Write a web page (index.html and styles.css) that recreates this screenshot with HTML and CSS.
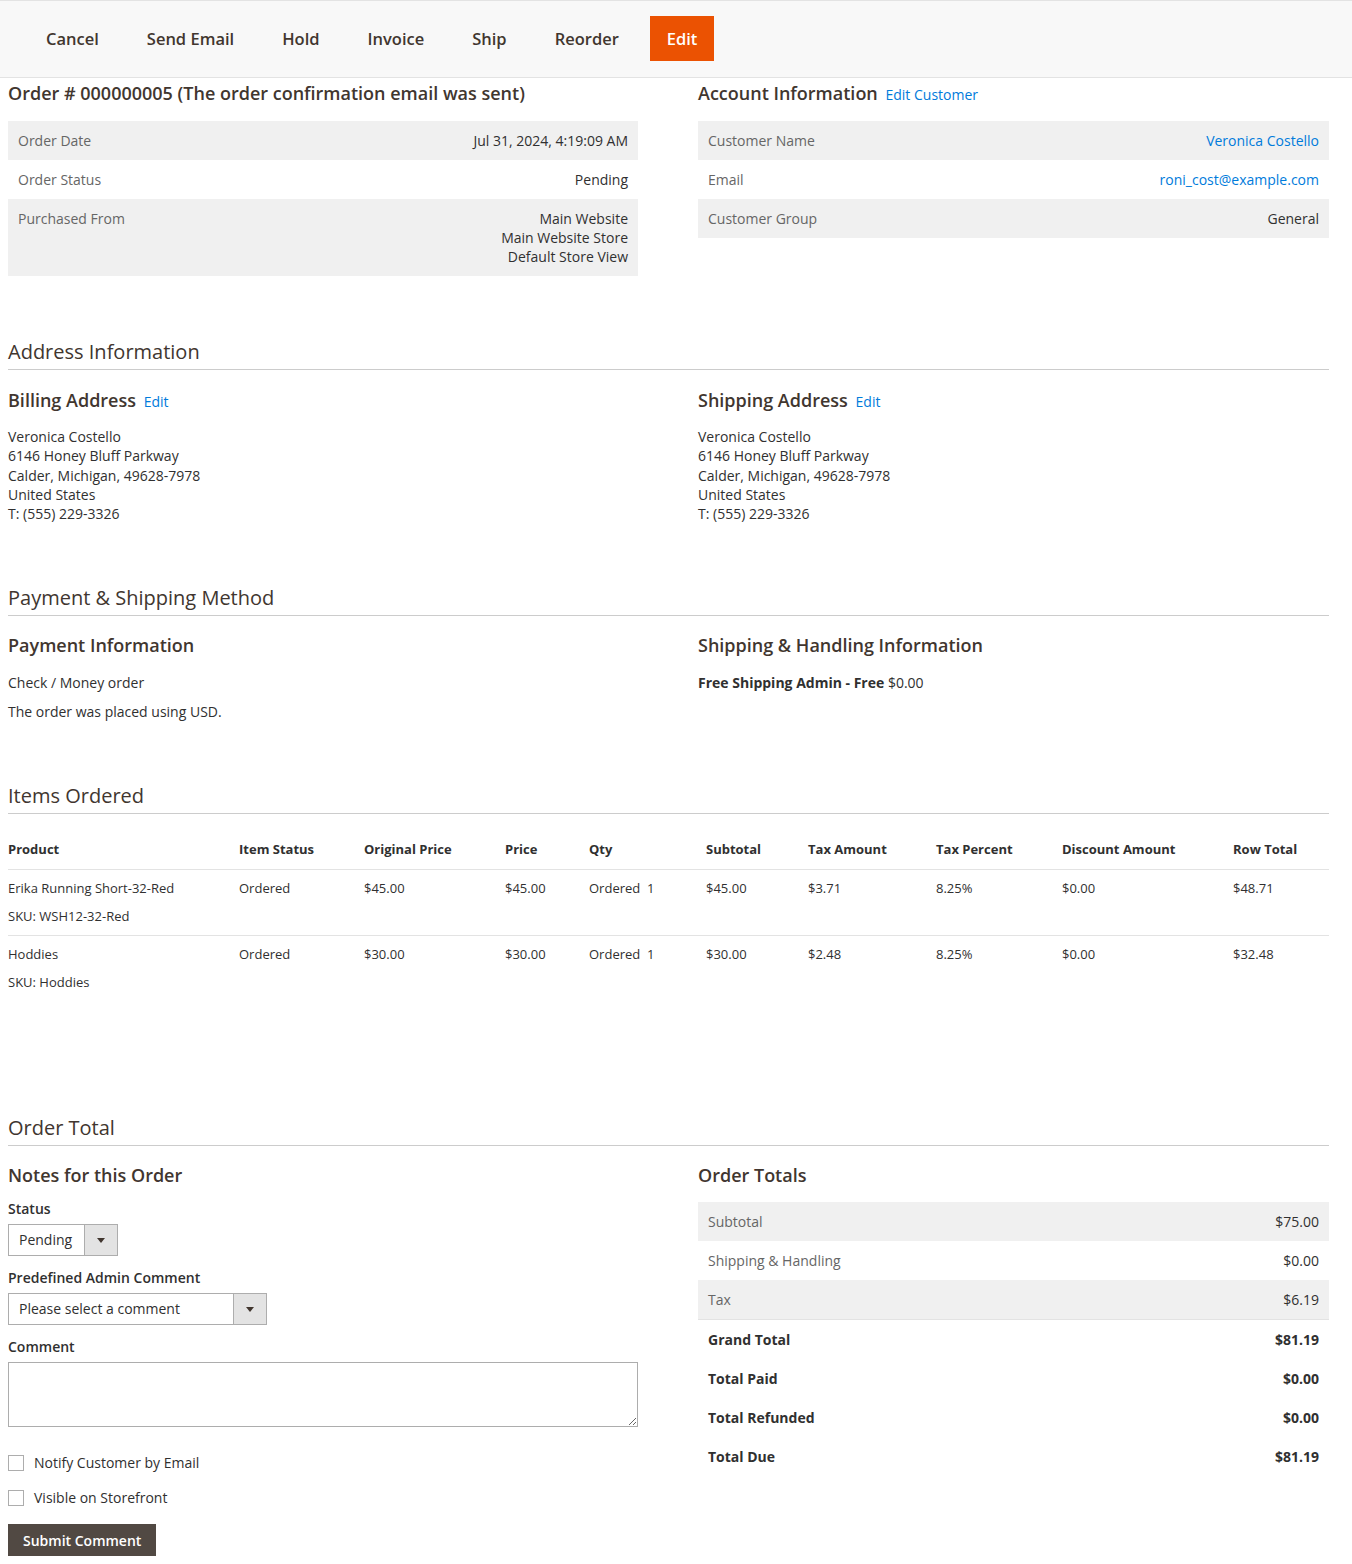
FILE: index.html
```html
<!DOCTYPE html>
<html lang="en">
<head>
<meta charset="utf-8">
<title>Order # 000000005</title>
<link rel="stylesheet" href="styles.css">
</head>
<body>
<div class="actions-bar">
  <button class="act">Cancel</button>
  <button class="act">Send Email</button>
  <button class="act">Hold</button>
  <button class="act">Invoice</button>
  <button class="act">Ship</button>
  <button class="act">Reorder</button>
  <button class="act act-primary">Edit</button>
</div>

<main class="page">
  <section class="two-col top">
    <div class="col">
      <h2 class="block-title">Order # 000000005 (The order confirmation email was sent)</h2>
      <table class="info">
        <tr><th>Order Date</th><td>Jul 31, 2024, 4:19:09 AM</td></tr>
        <tr><th>Order Status</th><td>Pending</td></tr>
        <tr><th>Purchased From</th><td>Main Website<br>Main Website Store<br>Default Store View</td></tr>
      </table>
    </div>
    <div class="col">
      <h2 class="block-title">Account Information <a class="link" href="#">Edit Customer</a></h2>
      <table class="info">
        <tr><th>Customer Name</th><td><a class="link" href="#">Veronica Costello</a></td></tr>
        <tr><th>Email</th><td><a class="link" href="#">roni_cost@example.com</a></td></tr>
        <tr><th>Customer Group</th><td>General</td></tr>
      </table>
    </div>
  </section>

  <section class="section addr">
    <h3 class="section-title">Address Information</h3>
    <div class="two-col">
      <div class="col">
        <h2 class="block-title">Billing Address <a class="link" href="#">Edit</a></h2>
        <address>Veronica Costello<br>6146 Honey Bluff Parkway<br>Calder, Michigan, 49628-7978<br>United States<br>T: (555) 229-3326</address>
      </div>
      <div class="col">
        <h2 class="block-title">Shipping Address <a class="link" href="#">Edit</a></h2>
        <address>Veronica Costello<br>6146 Honey Bluff Parkway<br>Calder, Michigan, 49628-7978<br>United States<br>T: (555) 229-3326</address>
      </div>
    </div>
  </section>

  <section class="section pay">
    <h3 class="section-title">Payment &amp; Shipping Method</h3>
    <div class="two-col">
      <div class="col">
        <h2 class="block-title">Payment Information</h2>
        <p class="line">Check / Money order</p>
        <p class="line">The order was placed using USD.</p>
      </div>
      <div class="col">
        <h2 class="block-title">Shipping &amp; Handling Information</h2>
        <p class="line"><strong>Free Shipping Admin - Free</strong> $0.00</p>
      </div>
    </div>
  </section>

  <section class="section items">
    <h3 class="section-title">Items Ordered</h3>
    <table class="grid">
      <colgroup>
        <col class="c-prod"><col class="c-status"><col class="c-orig"><col class="c-price"><col class="c-qty"><col class="c-sub"><col class="c-tax"><col class="c-pct"><col class="c-disc"><col class="c-row">
      </colgroup>
      <thead>
        <tr><th>Product</th><th>Item Status</th><th>Original Price</th><th>Price</th><th>Qty</th><th>Subtotal</th><th>Tax Amount</th><th>Tax Percent</th><th>Discount Amount</th><th>Row Total</th></tr>
      </thead>
      <tbody>
        <tr><td>Erika Running Short-32-Red<div class="sku">SKU: WSH12-32-Red</div></td><td>Ordered</td><td>$45.00</td><td>$45.00</td><td>Ordered&nbsp; 1</td><td>$45.00</td><td>$3.71</td><td>8.25%</td><td>$0.00</td><td>$48.71</td></tr>
        <tr><td>Hoddies<div class="sku">SKU: Hoddies</div></td><td>Ordered</td><td>$30.00</td><td>$30.00</td><td>Ordered&nbsp; 1</td><td>$30.00</td><td>$2.48</td><td>8.25%</td><td>$0.00</td><td>$32.48</td></tr>
      </tbody>
    </table>
  </section>

  <section class="section totals">
    <h3 class="section-title">Order Total</h3>
    <div class="two-col">
      <div class="col">
        <h2 class="block-title notes-title">Notes for this Order</h2>
        <div class="field">
          <label class="flabel">Status</label>
          <div class="select sel-status"><span class="sel-text">Pending</span><span class="sel-btn"><span class="tri"></span></span></div>
        </div>
        <div class="field">
          <label class="flabel">Predefined Admin Comment</label>
          <div class="select sel-comment"><span class="sel-text">Please select a comment</span><span class="sel-btn"><span class="tri"></span></span></div>
        </div>
        <div class="field">
          <label class="flabel">Comment</label>
          <textarea class="comment"></textarea>
        </div>
        <label class="check"><span class="box"></span>Notify Customer by Email</label>
        <label class="check"><span class="box"></span>Visible on Storefront</label>
        <button class="submit">Submit Comment</button>
      </div>
      <div class="col">
        <h2 class="block-title sums-title">Order Totals</h2>
        <table class="info sums">
          <tr><th>Subtotal</th><td>$75.00</td></tr>
          <tr><th>Shipping &amp; Handling</th><td>$0.00</td></tr>
          <tr><th>Tax</th><td>$6.19</td></tr>
          <tr class="strong first-strong"><th>Grand Total</th><td>$81.19</td></tr>
          <tr class="strong"><th>Total Paid</th><td>$0.00</td></tr>
          <tr class="strong"><th>Total Refunded</th><td>$0.00</td></tr>
          <tr class="strong"><th>Total Due</th><td>$81.19</td></tr>
        </table>
      </div>
    </div>
  </section>
</main>
</body>
</html>
```
FILE: styles.css
```css
* { box-sizing: border-box; }
html, body { margin: 0; padding: 0; }
body {
  font-family: "Open Sans", "Liberation Sans", sans-serif;
  font-size: 14px;
  line-height: 1.4;
  color: #303030;
  background: #fff;
}
a.link { color: #007bdb; text-decoration: none; }

.actions-bar {
  height: 78px;
  background: #f8f8f8;
  border-top: 1px solid #e3e3e3;
  border-bottom: 1px solid #e3e3e3;
  display: flex;
  align-items: flex-start;
  gap: 14px;
  padding: 15px 0 0 29px;
}
.act {
  font-family: inherit;
  font-size: 16.5px;
  font-weight: 600;
  color: #41362f;
  background: transparent;
  border: 0;
  height: 45px;
  padding: 0 17px 1px;
  cursor: pointer;
}
.act-primary { background: #eb5202; color: #fff; }

.page { width: 1329px; padding-left: 8px; }

.two-col {
  display: grid;
  grid-template-columns: 630px 631px;
  column-gap: 60px;
}
.block-title {
  margin: 0;
  font-size: 18px;
  font-weight: 600;
  color: #41362f;
  line-height: 24px;
}
.block-title .link { font-size: 14px; font-weight: 400; margin-left: 3px; line-height: 1; }

.top { padding-top: 3px; }
.top .block-title { margin-bottom: 16px; }

table.info { width: 100%; border-collapse: collapse; }
table.info th, table.info td {
  padding: 10px;
  vertical-align: top;
  line-height: 19px;
  font-size: 14px;
}
table.info th { text-align: left; font-weight: 400; color: #666; }
table.info td { text-align: right; color: #303030; }
table.info tr:nth-child(odd) th, table.info tr:nth-child(odd) td { background: #f0f0f0; }

.section-title {
  margin: 0 0 18px;
  font-size: 20px;
  font-weight: 400;
  color: #41362f;
  line-height: 28px;
  padding-bottom: 3px;
  border-bottom: 1px solid #cccccc;
}
.addr { margin-top: 62px; }
.addr .block-title { margin-bottom: 15px; }
address { font-style: normal; line-height: 19.3px; }

.pay { margin-top: 61px; }
.pay .section-title { margin-bottom: 17px; }
.pay .block-title { margin-bottom: 16px; }
.line { margin: 0 0 10px; line-height: 19px; }

.items { margin-top: 51px; }
.items .section-title { margin-bottom: 26px; }
table.grid { width: 1321px; border-collapse: collapse; font-size: 13px; }
table.grid th {
  text-align: left; font-weight: 700; color: #303030;
  padding: 0 0 10px; line-height: 19px;
  border-bottom: 1px solid #e3e3e3;
}
table.grid td { padding: 9px 0; vertical-align: top; line-height: 19px; color: #303030; }
table.grid tbody tr + tr td { border-top: 1px solid #e3e3e3; }
.sku { margin-top: 9px; }
.c-prod { width: 231px; } .c-status { width: 125px; } .c-orig { width: 141px; } .c-price { width: 84px; }
.c-qty { width: 117px; } .c-sub { width: 102px; } .c-tax { width: 128px; } .c-pct { width: 126px; }
.c-disc { width: 171px; } .c-row { width: 96px; }

.totals { margin-top: 113px; }
.totals .section-title { margin-bottom: 17px; }
.notes-title { margin-bottom: 12px; }
.sums-title { margin-bottom: 15px; }
.field { margin-bottom: 12px; }
.flabel { display: block; font-weight: 600; color: #303030; line-height: 19px; margin-bottom: 6px; }
.select {
  display: flex; height: 32px; border: 1px solid #adadad; background: #fff;
}
.sel-status { width: 110px; }
.sel-comment { width: 259px; }
.sel-text { flex: 1; padding: 0 10px; line-height: 30px; color: #303030; }
.sel-btn {
  width: 33px; background: #e3e3e3; border-left: 1px solid #adadad;
  display: flex; align-items: center; justify-content: center;
}
.tri { width: 0; height: 0; border-left: 4px solid transparent; border-right: 4px solid transparent; border-top: 5px solid #41362f; }
.comment {
  display: block; width: 630px; height: 65px; border: 1px solid #adadad; resize: vertical;
  font-family: inherit; margin: 0;
}
.check { display: flex; align-items: center; gap: 10px; line-height: 19px; margin-top: 26px; }
.check + .check { margin-top: 16px; }
.box { width: 16px; height: 16px; border: 1px solid #adadad; background: #fff; display: inline-block; }
.submit {
  margin-top: 17px; height: 32px; padding: 0 15px;
  background: #514943; color: #fff; border: 0;
  font-family: inherit; font-size: 14px; font-weight: 600;
}
.sums tr.first-strong th, .sums tr.first-strong td { border-top: 1px solid #e3e3e3; }
.sums tr.strong th, .sums tr.strong td { background: transparent !important; font-weight: 700; color: #303030; }
```
